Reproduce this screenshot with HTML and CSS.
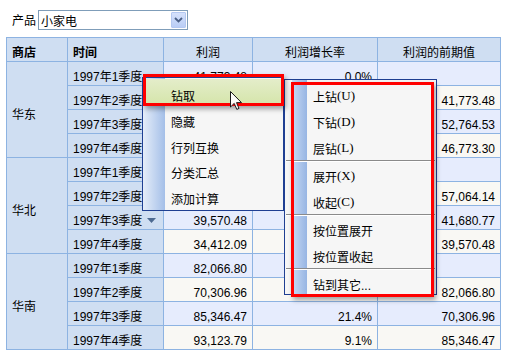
FILE: index.html
```html
<!DOCTYPE html>
<html lang="zh">
<head>
<meta charset="utf-8">
<title>钻取</title>
<link rel="stylesheet" href="styles.css">
</head>
<body>
<div class="page">
  <div class="filter">
    <span class="filter-label">产品</span>
    <div class="combo">
      <span class="combo-text">小家电</span>
      <span class="combo-btn">
        <svg width="9" height="6" viewBox="0 0 9 6"><path d="M1 1 L4.5 4.5 L8 1" fill="none" stroke="#4a5f86" stroke-width="1.8"/></svg>
      </span>
    </div>
  </div>

  <table class="grid">
    <colgroup><col class="c1"><col class="c2"><col class="c3"><col class="c4"><col class="c5"></colgroup>
    <thead>
      <tr><th class="hl">商店</th><th class="hl">时间</th><th>利润</th><th>利润增长率</th><th>利润的前期值</th></tr>
    </thead>
    <tbody>
      <tr class="odd"><td class="store" rowspan="4">华东</td><td class="q">1997年1季度</td><td class="n">41,773.48</td><td class="n">0.0%</td><td class="n"></td></tr>
      <tr class="even"><td class="q">1997年2季度</td><td class="n"></td><td class="n"></td><td class="n">41,773.48</td></tr>
      <tr class="odd"><td class="q">1997年3季度</td><td class="n"></td><td class="n"></td><td class="n">52,764.53</td></tr>
      <tr class="even"><td class="q">1997年4季度</td><td class="n"></td><td class="n"></td><td class="n">46,773.30</td></tr>
      <tr class="odd"><td class="store" rowspan="4">华北</td><td class="q">1997年1季度</td><td class="n"></td><td class="n"></td><td class="n"></td></tr>
      <tr class="even"><td class="q">1997年2季度</td><td class="n"></td><td class="n"></td><td class="n">57,064.14</td></tr>
      <tr class="odd"><td class="q">1997年3季度<span class="caret"><svg width="9" height="5" viewBox="0 0 9 5"><path d="M0 0 H9 L4.5 5 Z" fill="#4d6a91"/></svg></span></td><td class="n">39,570.48</td><td class="n"></td><td class="n">41,680.77</td></tr>
      <tr class="even"><td class="q">1997年4季度</td><td class="n">34,412.09</td><td class="n"></td><td class="n">39,570.48</td></tr>
      <tr class="odd"><td class="store" rowspan="4">华南</td><td class="q">1997年1季度</td><td class="n">82,066.80</td><td class="n"></td><td class="n"></td></tr>
      <tr class="even"><td class="q">1997年2季度</td><td class="n">70,306.96</td><td class="n"></td><td class="n">82,066.80</td></tr>
      <tr class="odd"><td class="q">1997年3季度</td><td class="n">85,346.47</td><td class="n">21.4%</td><td class="n">70,306.96</td></tr>
      <tr class="even"><td class="q">1997年4季度</td><td class="n">93,123.79</td><td class="n">9.1%</td><td class="n">85,346.47</td></tr>
    </tbody>
  </table>

  <div class="menu menu-main">
    <div class="m1-item active">钻取</div>
    <div class="m1-item first-rest">隐藏</div>
    <div class="m1-item">行列互换</div>
    <div class="m1-item">分类汇总</div>
    <div class="m1-item">添加计算</div>
  </div>

  <div class="menu menu-drill">
    <div class="m2-item">上钻<span class="key">(U)</span></div>
    <div class="m2-item">下钻<span class="key">(D)</span></div>
    <div class="m2-item">层钻<span class="key">(L)</span></div>
    <div class="sep"></div>
    <div class="m2-item">展开<span class="key">(X)</span></div>
    <div class="m2-item">收起<span class="key">(C)</span></div>
    <div class="sep"></div>
    <div class="m2-item">按位置展开</div>
    <div class="m2-item">按位置收起</div>
    <div class="sep"></div>
    <div class="m2-item">钻到其它...</div>
  </div>

  <div class="mark mark-1"></div>
  <div class="mark mark-2"></div>

  <svg class="cursor" width="13" height="20" viewBox="0 0 13 20">
    <path d="M0.5 0.5 L0.5 16 L4.2 12.4 L6.8 18.4 L9 17.4 L6.5 11.6 L11.5 11.6 Z" fill="#ffffff" fill-opacity="0.92" stroke="#1a1a1a" stroke-width="1" stroke-linejoin="miter"/>
  </svg>
</div>
</body>
</html>
```

FILE: styles.css
```css
html, body {
  margin: 0;
  padding: 0;
  background: #ffffff;
}

.page {
  position: relative;
  width: 527px;
  height: 361px;
  padding-top: 10px;
  box-sizing: border-box;
  font-family: "Liberation Sans", "Noto Sans CJK SC", sans-serif;
  font-size: 12px;
  color: #000;
}

/* filter row */
.filter {
  display: flex;
  align-items: center;
  height: 20px;
  margin-left: 12px;
  gap: 2px;
}
.filter-label {
  line-height: 20px;
  padding-top: 1px;
}
.combo {
  display: flex;
  align-items: center;
  justify-content: space-between;
  width: 150px;
  height: 20px;
  box-sizing: border-box;
  border: 1px solid #7f9db9;
  background: #fff;
}
.combo-text {
  padding-left: 2px;
  padding-top: 1px;
}
.combo-btn {
  display: flex;
  align-items: center;
  justify-content: center;
  width: 15px;
  height: 16px;
  margin-right: 1px;
  box-sizing: border-box;
  border: 1px solid #b4c8f1;
  border-radius: 1px;
  background: linear-gradient(#d5e1fb, #b9cdf6);
}

/* grid */
.grid {
  margin: 7px 0 0 6px;
  border-collapse: collapse;
  table-layout: fixed;
  width: 494px;
}
.c1 { width: 61px; }
.c2 { width: 96px; }
.c3 { width: 89px; }
.c4 { width: 125px; }
.c5 { width: 123px; }

.grid tr { height: 24px; }
.grid th,
.grid td {
  border: 1px solid #8db3e2;
  padding: 0 5px 1px 5px;
  line-height: 14px;
  vertical-align: bottom;
  white-space: nowrap;
  overflow: hidden;
}
.grid th {
  background: #cfdef2;
  font-weight: normal;
  text-align: center;
}
.grid th.hl {
  font-weight: bold;
  text-align: left;
}
.grid td.store {
  background: #cfdef2;
  vertical-align: middle;
  padding-top: 11px;
  padding-bottom: 0;
}
.grid td.q {
  background: #cfdef2;
}
.grid tr.odd td.n { background: #e6ecfd; }
.grid tr.even td.n { background: #f9f8f4; }
.grid td.n { text-align: right; }

.caret {
  display: inline-block;
  margin-left: 5px;
  vertical-align: 2px;
}
.caret svg { display: block; }

/* menus */
.menu {
  position: absolute;
  box-sizing: border-box;
  border: 1px solid #1f3f92;
  background-color: #f6f6f6;
}
.menu-main {
  left: 142px;
  top: 77px;
  width: 142px;
  height: 134px;
  padding-top: 1px;
  background-image: linear-gradient(to right, #e5edf9, #a4bfe8);
  background-size: 22px 100%;
  background-repeat: no-repeat;
}
.m1-item {
  display: flex;
  align-items: center;
  height: 25.6px;
  box-sizing: border-box;
  padding: 2px 0 0 28px;
}
.m1-item.active {
  height: 25px;
  margin-left: 1px;
  padding-top: 7px;
  padding-left: 27px;
  background: linear-gradient(#e4edca, #d5e5ab);
}
.m1-item.first-rest {
  margin-top: 4px;
}

.menu-drill {
  left: 284px;
  top: 79px;
  width: 153px;
  height: 216px;
  padding-top: 2px;
  overflow: hidden;
  background-image: linear-gradient(to right, #c8d9f3, #97b5e3);
  background-position: 7px 0;
  background-size: 15px 100%;
  background-repeat: no-repeat;
}
.m2-item {
  display: flex;
  align-items: center;
  height: 26px;
  box-sizing: border-box;
  padding: 2px 0 0 28px;
}
.key {
  font-family: "Liberation Serif", serif;
  font-size: 13px;
}
.sep {
  height: 2px;
  box-sizing: border-box;
  margin: 0 1px;
  border-top: 1px solid #8a8a8a;
  border-bottom: 1px solid #ffffff;
  background: #f6f6f6;
}

/* red annotation frames */
.mark {
  position: absolute;
  box-sizing: border-box;
  border: 3px solid #ff0000;
  box-shadow: 2px 3px 5px rgba(0, 0, 0, 0.35);
}
.mark-1 {
  left: 143px;
  top: 74px;
  width: 141px;
  height: 32px;
}
.mark-2 {
  left: 291px;
  top: 82px;
  width: 143px;
  height: 215px;
}

.cursor {
  position: absolute;
  left: 230px;
  top: 91px;
}
```
